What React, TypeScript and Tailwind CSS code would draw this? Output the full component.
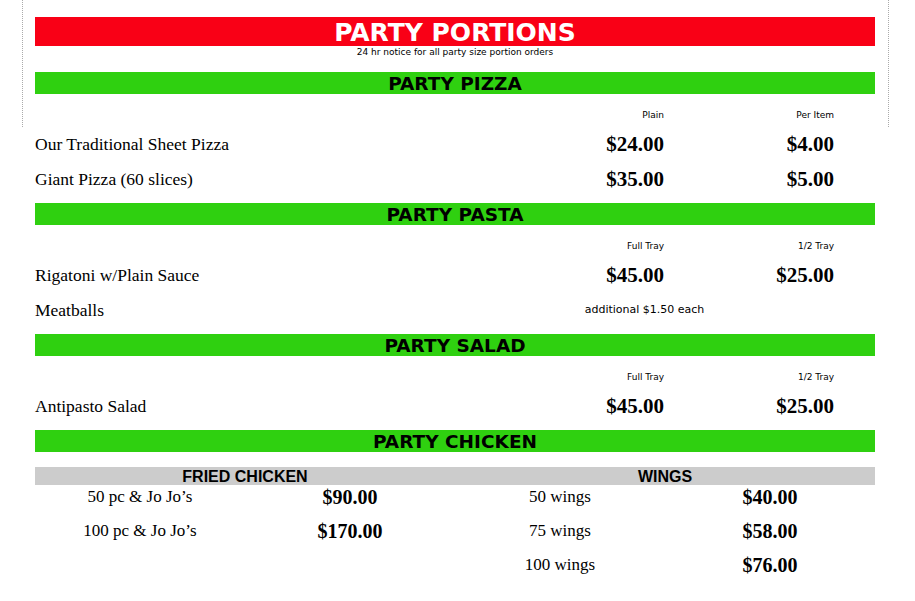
import React from "react";

const serif = "font-['Liberation_Serif',Georgia,serif]";
const verdana = "font-['DejaVu_Sans',Verdana,sans-serif]";

type Row = { name: string; a?: string; b?: string; note?: string };

const sections: { title: string; cols: [string, string]; rows: Row[] }[] = [
  {
    title: "PARTY PIZZA",
    cols: ["Plain", "Per Item"],
    rows: [
      { name: "Our Traditional Sheet Pizza", a: "$24.00", b: "$4.00" },
      { name: "Giant Pizza (60 slices)", a: "$35.00", b: "$5.00" },
    ],
  },
  {
    title: "PARTY PASTA",
    cols: ["Full Tray", "1/2 Tray"],
    rows: [
      { name: "Rigatoni w/Plain Sauce", a: "$45.00", b: "$25.00" },
      { name: "Meatballs", note: "additional $1.50 each" },
    ],
  },
  {
    title: "PARTY SALAD",
    cols: ["Full Tray", "1/2 Tray"],
    rows: [{ name: "Antipasto Salad", a: "$45.00", b: "$25.00" }],
  },
];

const fried = [
  ["50 pc & Jo Jo\u2019s", "$90.00"],
  ["100 pc & Jo Jo\u2019s", "$170.00"],
];
const wings = [
  ["50 wings", "$40.00"],
  ["75 wings", "$58.00"],
  ["100 wings", "$76.00"],
];

function Bar({ title }: { title: string }) {
  return (
    <div className={`h-[22px] bg-[#2fd010] pt-[1px] text-center text-[18.5px] font-bold leading-[22px] text-black ${verdana}`}>
      {title}
    </div>
  );
}

function PriceList({ items }: { items: string[][] }) {
  return (
    <div className="flex flex-1 flex-col gap-[14px] pt-[2px]">
      {items.map(([n, p]) => (
        <div key={n} className="grid h-[20px] grid-cols-2 items-center text-center leading-[20px]">
          <span className={`${serif} text-[17px]`}>{n}</span>
          <span className={`${serif} text-[20px] font-bold`}>{p}</span>
        </div>
      ))}
    </div>
  );
}

export default function App() {
  return (
    <div className="relative min-h-[601px] w-[915px] bg-white text-black">
      <div className="absolute left-[22px] top-0 h-[127px] border-l border-dotted border-[#aaa]" />
      <div className="absolute left-[888px] top-0 h-[127px] border-l border-dotted border-[#aaa]" />

      <div className="mx-[35px] w-[840px] pt-[17px]">
        <div className={`h-[29px] bg-[#f90016] pt-[1px] text-center text-[25px] font-bold leading-[29px] text-white ${verdana}`}>
          PARTY PORTIONS
        </div>
        <div className={`h-[11px] pt-[1px] text-center text-[9px] leading-[10px] ${verdana}`}>
          24 hr notice for all party size portion orders
        </div>

        <div className="mt-[15px] flex flex-col">
          {sections.map((s) => (
            <div key={s.title} className="mb-[14px]">
              <Bar title={s.title} />
              <div className="pr-[41px] pt-[15px]">
                <div className={`grid h-[12px] grid-cols-[1fr_170px_170px] text-right text-[9px] leading-[12px] ${verdana}`}>
                  <span />
                  <span>{s.cols[0]}</span>
                  <span>{s.cols[1]}</span>
                </div>
                <div className="mt-[13px] flex flex-col gap-[15px]">
                  {s.rows.map((r) => (
                    <div key={r.name} className="grid h-[20px] grid-cols-[1fr_170px_170px] items-center leading-[20px]">
                      <span className={`${serif} text-[17.5px]`}>{r.name}</span>
                      {r.note ? (
                        <span className={`col-span-2 pr-[39px] text-center text-[11px] ${verdana}`}>{r.note}</span>
                      ) : (
                        <>
                          <span className={`${serif} text-right text-[21px] font-bold`}>{r.a}</span>
                          <span className={`${serif} text-right text-[21px] font-bold`}>{r.b}</span>
                        </>
                      )}
                    </div>
                  ))}
                </div>
              </div>
            </div>
          ))}

          <Bar title="PARTY CHICKEN" />
          <div className="mt-[15px] grid h-[18px] grid-cols-2 bg-[#cccccc] pt-[1px] text-center font-['Liberation_Sans',Arial,sans-serif] text-[16px] font-bold leading-[18px]">
            <span>FRIED CHICKEN</span>
            <span>WINGS</span>
          </div>
          <div className="flex">
            <PriceList items={fried} />
            <PriceList items={wings} />
          </div>
        </div>
      </div>
    </div>
  );
}
